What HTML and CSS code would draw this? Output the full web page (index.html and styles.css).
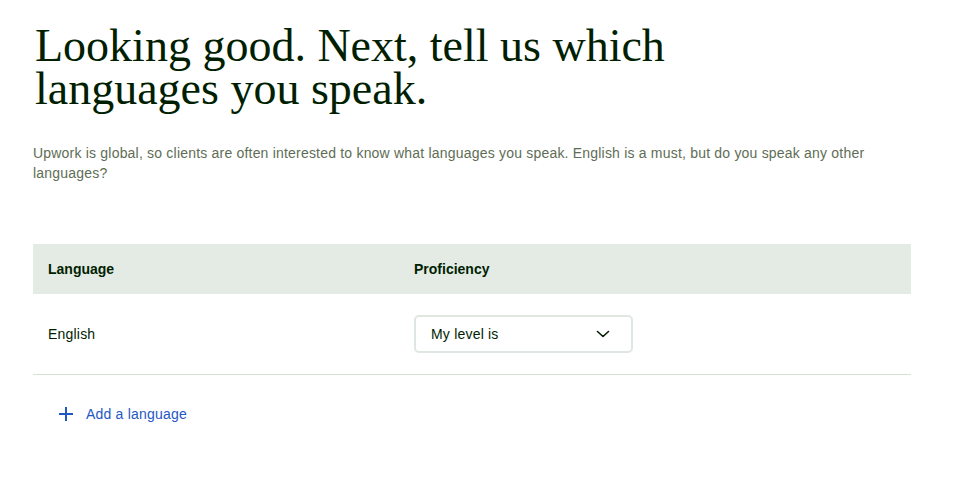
FILE: index.html
```html
<!DOCTYPE html>
<html>
<head>
<meta charset="utf-8">
<link rel="stylesheet" href="styles.css">
</head>
<body>
<main class="page">
  <h1 class="title">Looking good. Next, tell us which<br>languages you speak.</h1>
  <p class="lead">Upwork is global, so clients are often interested to know what languages you speak. English is a must, but do you speak any other languages?</p>
  <div class="table">
    <div class="thead">
      <div class="col-lang">Language</div>
      <div class="col-prof">Proficiency</div>
    </div>
    <div class="row">
      <div class="col-lang">English</div>
      <div class="col-prof">
        <div class="select">
          <span>My level is</span>
          <svg class="chev" width="16" height="16" viewBox="0 0 16 16"><path d="M2.5 5.5 L8 10.5 L13.5 5.5" fill="none" stroke="#001e00" stroke-width="1.6" stroke-linecap="round" stroke-linejoin="round"/></svg>
        </div>
      </div>
    </div>
  </div>
  <button class="add">
    <svg width="16" height="16" viewBox="0 0 16 16"><path d="M8 1v14M1 8h14" stroke="#1f57c3" stroke-width="2"/></svg>
    <span>Add a language</span>
  </button>
</main>
</body>
</html>
```
FILE: styles.css
```css
html, body { margin: 0; padding: 0; background: #fff; }
body { font-family: "Liberation Sans", Arial, sans-serif; color: #001e00; letter-spacing: 0.2px; }
.page { padding: 24px 46px 0 33px; }
.title {
  margin: 0 0 0 2px;
  font-family: "Liberation Serif", "Times New Roman", serif;
  font-weight: 400;
  font-size: 46px;
  line-height: 43px;
  letter-spacing: 0;
  color: #001e00;
}
.lead {
  margin: 33px 0 0 0;
  font-size: 14px;
  line-height: 20px;
  color: #5e6d55;
  max-width: 870px;
}
.table { margin-top: 61px; }
.thead, .row { display: flex; align-items: center; }
.thead {
  height: 50px;
  background: #e4ebe4;
  font-weight: 700;
  font-size: 14px;
  letter-spacing: 0;
}
.row {
  height: 80px;
  border-bottom: 1px solid #d5e0d5;
  font-size: 14px;
}
.col-lang { width: 366px; padding-left: 15px; }
.col-prof { flex: 1; }
.select {
  width: 215px;
  height: 34px;
  box-sizing: content-box;
  border: 2px solid #e0e6e0;
  border-radius: 5px;
  display: flex;
  align-items: center;
  justify-content: space-between;
}
.select span { padding-left: 15px; font-size: 14px; color: #001e00; }
.chev { margin-right: 20px; }
.add {
  margin: 31px 0 0 25px;
  display: flex;
  align-items: center;
  gap: 12px;
  background: none;
  border: 0;
  padding: 0;
  font-family: "Liberation Sans", Arial, sans-serif;
  font-size: 14px;
  letter-spacing: 0.2px;
  color: #1f57c3;
  cursor: pointer;
}
```
